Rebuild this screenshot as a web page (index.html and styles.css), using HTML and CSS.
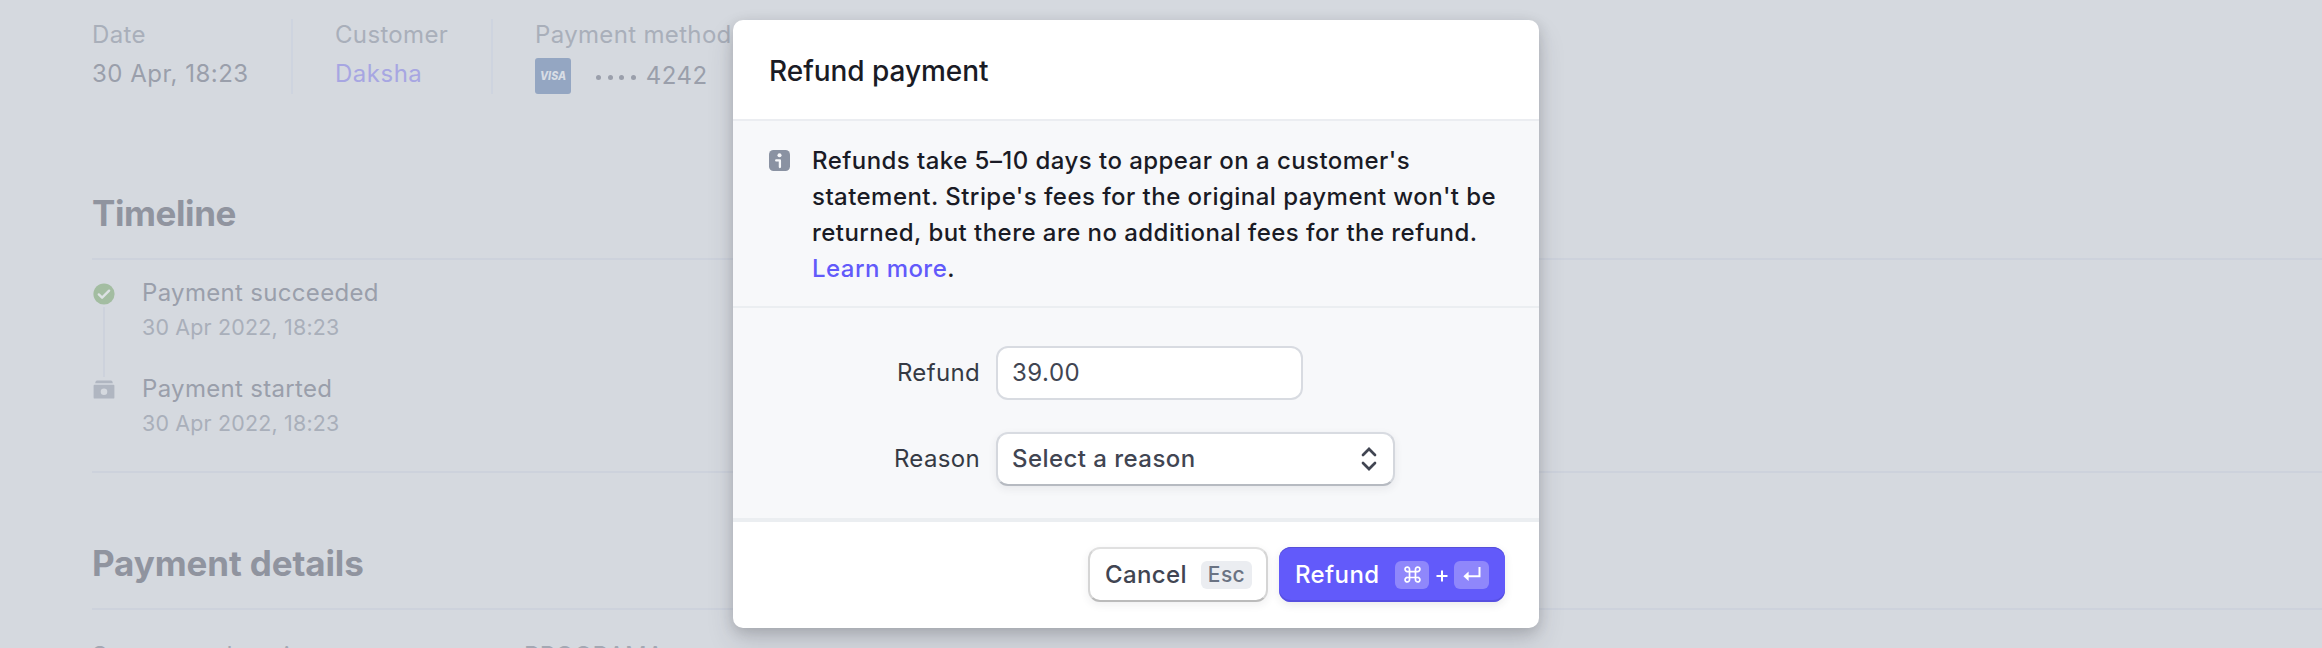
FILE: index.html
```html
<!DOCTYPE html>
<html lang="en">
<head>
<meta charset="utf-8">
<title>Refund payment</title>
<link rel="stylesheet" href="styles.css">
</head>
<body>
<main class="page">
  <section class="summary">
    <div class="fact">
      <div class="fact-label">Date</div>
      <div class="fact-value when">30 Apr, 18:23</div>
    </div>
    <div class="fact">
      <div class="fact-label">Customer</div>
      <div class="fact-value link">Daksha</div>
    </div>
    <div class="fact">
      <div class="fact-label">Payment method</div>
      <div class="card-row">
        <svg class="visa" viewBox="0 0 36 36"><rect width="36" height="36" rx="3" fill="#94a6c2"/><text x="5" y="22" class="visa-text" textLength="26" lengthAdjust="spacingAndGlyphs">VISA</text></svg>
        <span class="dots"><i></i><i></i><i></i><i></i></span>
        <span>4242</span>
      </div>
    </div>
  </section>

  <section class="timeline">
    <h2 class="tight">Timeline</h2>
    <div class="events">
      <div class="event">
        <svg class="event-icon" viewBox="0 0 22 22"><circle cx="11" cy="11" r="10.6" fill="#a3bda1"/><path d="M5.8 11.4l3.3 3.3 7-7" fill="none" stroke="#dde2e4" stroke-width="2.4" stroke-linecap="round" stroke-linejoin="round"/></svg>
        <div class="event-text">
          <div class="event-title">Payment succeeded</div>
          <div class="event-date">30 Apr 2022, 18:23</div>
        </div>
        <span class="thread"></span>
      </div>
      <div class="event">
        <svg class="event-icon" viewBox="0 0 22 22"><path d="M2.3 3.6Q2.6 1.6 4 1.6H18Q19.4 1.6 19.700 3.6V4.2H2.3Z" fill="#b0b6c1"/><path fill-rule="evenodd" d="M1.6 5.8H20.4Q21.4 5.8 21.4 6.8V18.4Q21.4 19.6 20.4 19.6H1.6Q.6 19.6 .6 18.4V6.8Q.6 5.8 1.6 5.8ZM11 9.500a3.300 3.300 0 1 0 0 6.600a3.300 3.300 0 1 0 0-6.600Z" fill="#b0b6c1"/></svg>
        <div class="event-text">
          <div class="event-title">Payment started</div>
          <div class="event-date">30 Apr 2022, 18:23</div>
        </div>
      </div>
    </div>
  </section>

  <section class="details">
    <h2>Payment details</h2>
    <div class="detail-row">
      <span class="detail-label">Statement descriptor</span>
      <span class="detail-value">PROGRAMA</span>
    </div>
  </section>
</main>

<div class="modal" role="dialog">
  <header class="modal-header">Refund payment</header>
  <div class="notice">
    <svg class="info" viewBox="0 0 21 21"><rect width="21" height="21" rx="4.5" fill="#8a92a2"/><circle cx="10.5" cy="5.2" r="2.05" fill="#f7f8fa"/><path d="M7.2 10.4H10.900V17" fill="none" stroke="#f7f8fa" stroke-width="2.3" stroke-linecap="round" stroke-linejoin="round"/></svg>
    <p class="notice-text">Refunds take 5–10 days to appear on a customer's<br>statement. Stripe's fees for the original payment won't be<br>returned, but there are no additional fees for the refund.<br><a>Learn more</a>.</p>
  </div>
  <div class="form">
    <label class="form-label">Refund</label>
    <div class="input">39.00</div>
    <label class="form-label">Reason</label>
    <div class="select"><span>Select a reason</span>
      <svg class="sort" viewBox="0 0 16 24"><path d="M2 8L8 2L14 8M2 16L8 22L14 16" fill="none" stroke="#414552" stroke-width="2.7" stroke-linecap="round" stroke-linejoin="miter"/></svg>
    </div>
  </div>
  <footer class="modal-footer">
    <button class="btn cancel"><span>Cancel</span><kbd class="key esc">Esc</kbd></button>
    <button class="btn primary"><span>Refund</span><kbd class="key cmd"><svg viewBox="0 0 16 16" width="17" height="17"><path d="M5.200 5.200H10.800V10.800H5.200ZM5.200 5.200H3.200A2.100 2.100 0 1 1 5.200 3.200ZM10.800 5.200V3.200A2.100 2.100 0 1 1 12.800 5.200ZM10.800 10.800H12.800A2.100 2.100 0 1 1 10.800 12.800ZM5.200 10.800V12.800A2.100 2.100 0 1 1 3.200 10.800Z" fill="none" stroke="#fff" stroke-width="1.6"/></svg></kbd><svg class="plus" viewBox="0 0 12 12"><path d="M6 .5V11.5M.5 6H11.5" stroke="#fff" stroke-width="2"/></svg><kbd class="key ret"><svg viewBox="0 0 18 16" width="18" height="16"><path d="M16.500 0V9.300H4" fill="none" stroke="#fff" stroke-width="2"/><path d="M.4 9.300L5.600 4.500V14.100Z" fill="#fff"/></svg></kbd></button>
  </footer>
</div>
</body>
</html>
```
FILE: styles.css
```css
* { box-sizing: border-box; }
body {
  margin: 0;
  width: 2322px;
  height: 648px;
  overflow: hidden;
  position: relative;
  background: #d5d9df;
  font-family: Inter, "Liberation Sans", sans-serif;
  font-size: 24px;
  letter-spacing: .34px;
  white-space: nowrap;
}

/* Dimmed page */
.page { padding: 19px 0 0 92px; height: 648px; overflow: hidden; color: #9a9fab; }
.summary { display: flex; height: 75px; }
.fact + .fact { border-left: 2px solid #ced4df; padding-left: 42px; }
.fact:nth-child(1) { width: 199px; }
.fact:nth-child(2) { width: 200px; }
.fact-label { color: #a9afba; line-height: 32px; }
.fact-value { line-height: 32px; margin-top: 7px; }
.when { letter-spacing: .5px; }
.link { color: #a7a6e2; letter-spacing: .5px; }
.card-row { display: flex; align-items: center; height: 36px; margin-top: 7px; line-height: 34px; }
.card-row > span:last-child { letter-spacing: .5px; }
.visa { width: 36px; height: 36px; }
.visa-text { font: italic 800 12px Inter, sans-serif; letter-spacing: 0; fill: #d8dde5; }
.dots { display: flex; gap: 6.6px; margin: 3px 10px 0 25px; }
.dots i { width: 5px; height: 5px; border-radius: 50%; background: #9a9fab; }

h2 { margin: 0; font-size: 35px; font-weight: 700; line-height: 42px; padding-bottom: 2px; letter-spacing: -.12px; color: #90949f; }
.tight { letter-spacing: -.4px; }
.timeline { padding-top: 98px; }
.events { margin-top: 22px; border-top: 2px solid #cdd2dc; border-bottom: 2px solid #cdd2dc; height: 215px; padding-top: 16px; }
.event { display: grid; grid-template-columns: 50px 1fr; height: 96px; position: relative; }
.event-icon { width: 22px; height: 22px; margin: 7px 0 0 1px; }
.event-title { line-height: 34px; letter-spacing: .32px; }
.event-date { font-size: 21.4px; line-height: 30px; color: #a9afba; margin-top: 2px; letter-spacing: .2px; }
.thread { position: absolute; left: 11px; top: 31px; width: 2px; height: 70px; background: #cdd2dc; }

.details { padding-top: 69px; }
.detail-row { display: flex; margin-top: 22px; border-top: 2px solid #cdd2dc; padding-top: 30px; line-height: 32px; color: #a3a8b3; }
.detail-label { width: 432px; }

/* Dialog */
.modal {
  position: absolute;
  left: 733px;
  top: 20px;
  width: 806px;
  height: 608px;
  border-radius: 10px;
  overflow: hidden;
  background: #fff;
  color: #1a1b25;
  box-shadow: 0 14px 28px rgba(48, 49, 61, .14), 0 4px 14px rgba(0, 0, 0, .16);
}
.modal-header { height: 101px; padding: 34px 36px 0; border-bottom: 2px solid #ebedf1; font-size: 28px; font-weight: 500; line-height: 34px; letter-spacing: -.04px; }
.notice { display: flex; height: 187px; padding: 22px 36px; background: #f7f8fa; border-bottom: 2px solid #ebeef1; font-weight: 500; letter-spacing: .45px; }
.info { width: 21px; height: 21px; margin: 7px 22px 0 0; flex: none; }
.notice-text { margin: 0; line-height: 36px; }
.notice-text a { color: #625afa; }
.form { display: grid; grid-template-columns: 247px 399px; grid-template-rows: 54px 54px; column-gap: 16px; row-gap: 32px; height: 214px; padding-top: 38px; background: #f7f8fa; border-bottom: 4px solid #ebeef1; color: #414552; }
.form-label { text-align: right; line-height: 54px; color: #353a44; }
.input, .select { height: 54px; background: #fff; border: 2px solid #d8dbe1; border-radius: 12px; padding-left: 14px; line-height: 50px; }
.input { width: 307px; letter-spacing: .5px; }
.select { display: flex; justify-content: space-between; align-items: center; padding-right: 16px; font-weight: 500; letter-spacing: .45px; border-color: #d8dbe1 #d4d7dd #b6bac1; box-shadow: 0 3px 8px rgba(48, 49, 61, .08); }
.sort { width: 16px; height: 24px; }
.modal-footer { display: flex; justify-content: flex-end; gap: 11px; padding: 25px 34px 0; height: 106px; }
.btn { display: flex; align-items: center; height: 55px; padding: 0 16px; border: 2px solid #dedede; border-radius: 12px; background: #fff; font: 500 24px Inter, sans-serif; letter-spacing: .38px; color: #414552; }
.cancel { width: 180px; padding: 0 14px 0 15px; justify-content: space-between; border-color: #e0e0e0 #d5d5d5 #bbb; box-shadow: 0 3px 8px rgba(48, 49, 61, .08); }
.primary { width: 226px; border: 0; padding: 0 16px; background: #625afa; color: #fff; box-shadow: inset 0 -2px 0 #574fe0, inset 0 1px 0 #564fd8, 0 3px 8px rgba(48, 49, 61, .1); }
.key { display: flex; align-items: center; justify-content: center; height: 28px; border-radius: 6px; font: 500 21px Inter, sans-serif; letter-spacing: .4px; }
.esc { width: 51px; background: #ebedf1; color: #6a7383; }
.cmd { width: 34px; background: #8f87fb; margin-left: auto; }
.ret { width: 35px; background: #8f87fb; }
.plus { width: 12px; height: 12px; margin: 2px 6.5px 0; }
```
